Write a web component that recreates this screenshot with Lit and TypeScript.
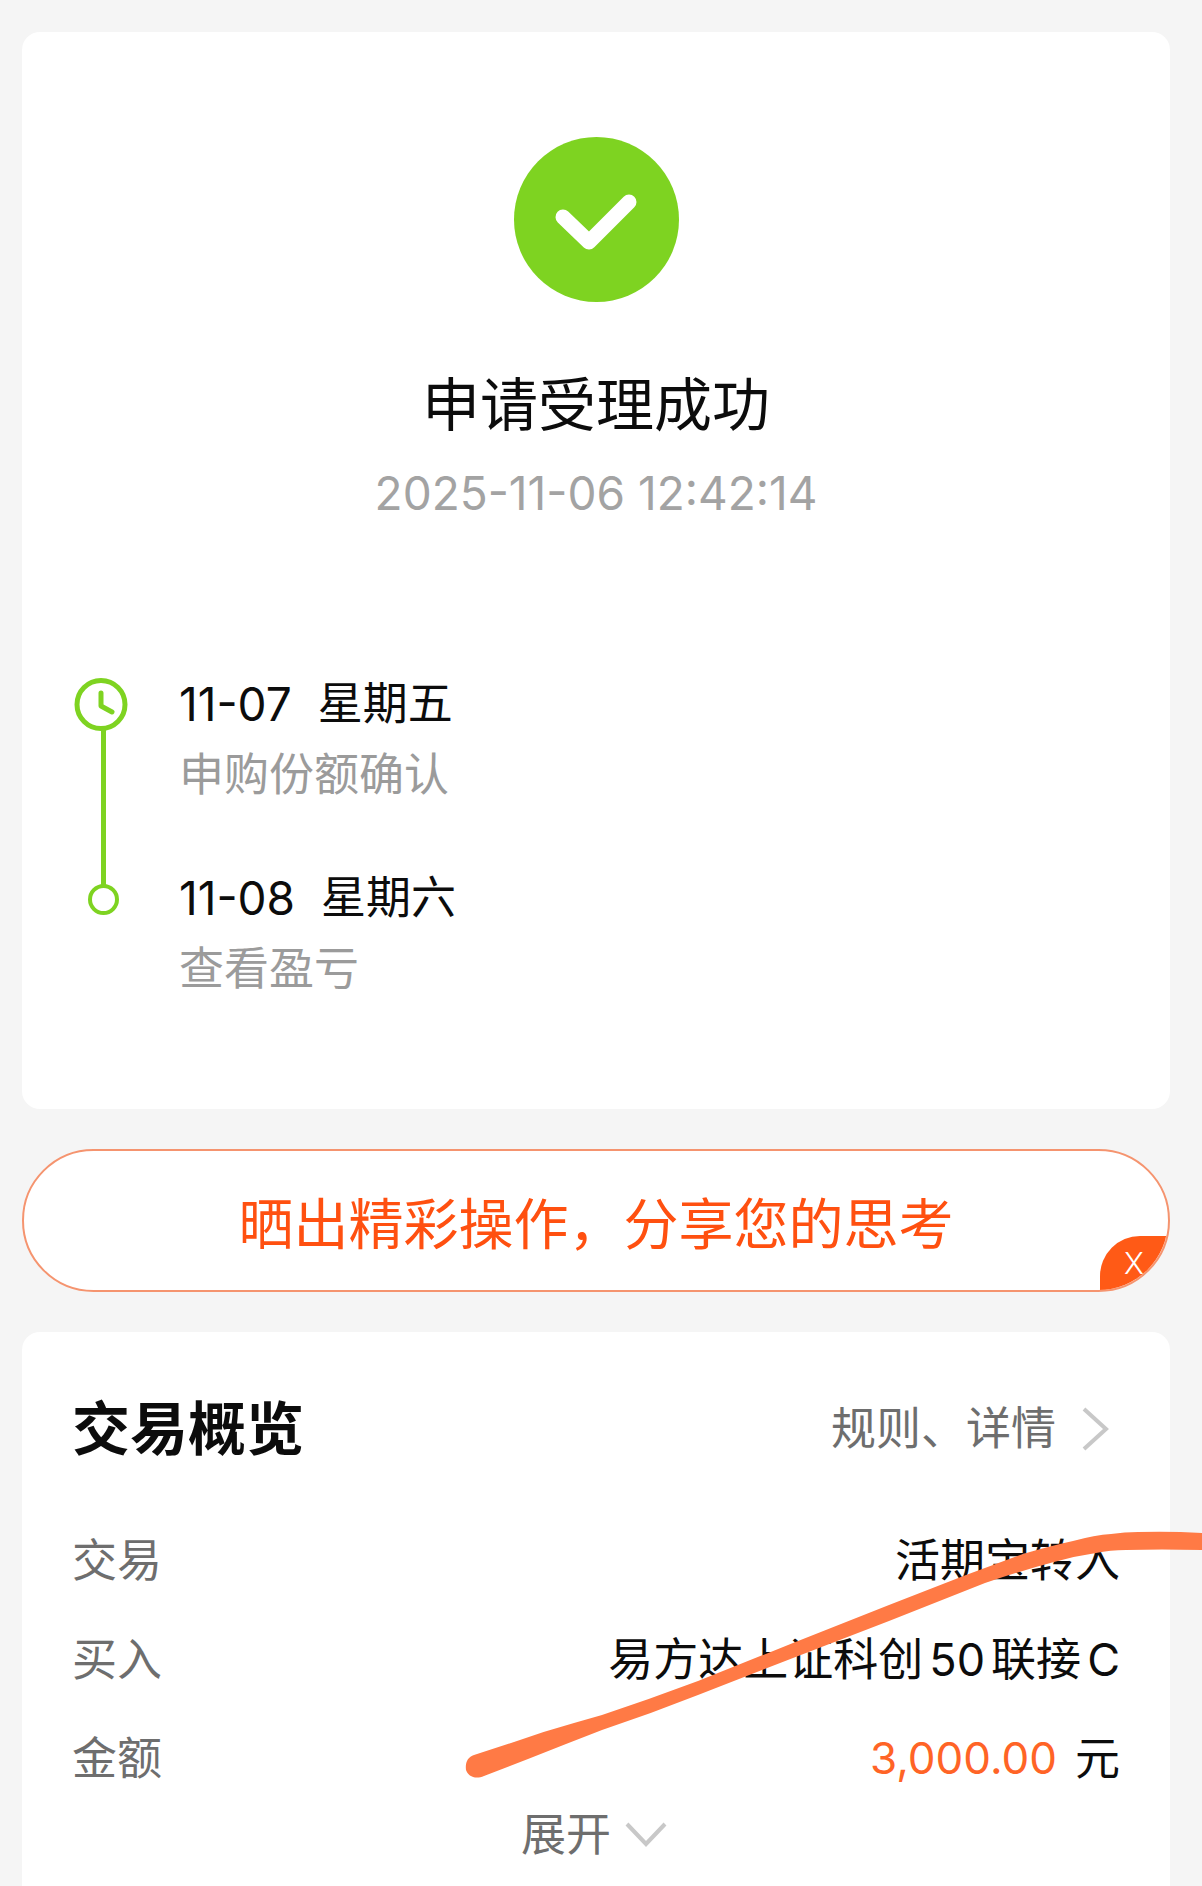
import { LitElement, html, svg, css } from "lit";
import { customElement } from "lit/decorators.js";

interface Step {
  date: string;
  weekday: string;
  note: string;
}

const STEPS: Step[] = [
  { date: "11-07", weekday: "星期五", note: "申购份额确认" },
  { date: "11-08", weekday: "星期六", note: "查看盈亏" },
];

const FUND_NAME = ["易方达上证科创", "50", "联接", "C"];

const clockMarker = svg`
  <circle cx="27" cy="27.500" r="24" fill="none" stroke="#7ed321" stroke-width="5" />
  <path d="M27 16V29L38 35" fill="none" stroke="#7ed321" stroke-width="5" stroke-linecap="round" stroke-linejoin="round" />
  <path d="M29.500 51V54" stroke="#7ed321" stroke-width="5" />`;

const dotMarker = svg`
  <path d="M29.500 0V15" stroke="#7ed321" stroke-width="5" />
  <circle cx="29.500" cy="28.500" r="13.500" fill="#fff" stroke="#7ed321" stroke-width="4" />`;

@customElement("app-root")
export class AppRoot extends LitElement {
  static styles = css`
    :host {
      display: block;
      color: #0c0c0c;
      font-family: Inter, "Noto Sans CJK SC", sans-serif;
      font-size: 45px;
    }
    .page {
      box-sizing: border-box;
      min-height: 100vh;
      display: flex;
      flex-direction: column;
      gap: 40px;
      padding: 32px 32px 0 22px;
      background: #f5f5f5;
      overflow: hidden;
    }
    .card {
      background: #fff;
      border-radius: 18px;
    }
    h1, h2, p, ol, dl, dd, dt {
      margin: 0;
      padding: 0;
    }
    button {
      border: 0;
      padding: 0;
      background: none;
      font: inherit;
      color: inherit;
      cursor: pointer;
    }
    .result {
      padding: 105px 50px 115px;
    }
    .summary {
      display: flex;
      flex-direction: column;
      align-items: center;
    }
    .done {
      display: block;
      width: 165px;
      height: 165px;
    }
    h1 {
      margin-top: 67px;
      font-size: 58px;
      line-height: 72px;
      font-weight: 400;
    }
    .time {
      margin-top: 24px;
      font-size: 46px;
      line-height: 56px;
      color: #a3a3a3;
    }
    .steps {
      margin-top: 156px;
      padding-left: 2px;
      list-style: none;
    }
    .step {
      display: flex;
      gap: 46px;
    }
    .track {
      display: flex;
      flex-direction: column;
      align-items: center;
      width: 59px;
    }
    .track svg {
      display: block;
      width: 59px;
      height: 54px;
      flex: none;
    }
    .line {
      flex: 1;
      width: 5px;
      background: #7ed321;
    }
    .step-body {
      display: flex;
      flex-direction: column;
      gap: 21px;
      padding-top: 2px;
      line-height: 50px;
    }
    .step:not(:last-child) .step-body {
      padding-bottom: 71px;
    }
    .when {
      display: flex;
      gap: 26px;
    }
    .date {
      font-size: 46px;
    }
    .note {
      color: #9b9b9b;
    }
    .share {
      position: relative;
      display: flex;
      border: 2px solid #f5946f;
      border-radius: 72px;
      background: #fff;
      overflow: hidden;
    }
    .share-main {
      flex: 1;
      padding: 42px 0 34px;
      font-size: 55px;
      line-height: 63px;
      color: #ff5010;
    }
    .share-close {
      position: absolute;
      right: 0;
      bottom: 0;
      width: 68px;
      height: 54px;
      border-top-left-radius: 40px;
      background: #ff5a16;
      color: #fff;
      font-size: 30px;
      font-weight: 300;
      line-height: 54px;
    }
    .overview {
      position: relative;
      flex: 1;
      padding: 62px 50px 20px;
      border-radius: 18px 18px 0 0;
    }
    .head {
      display: flex;
      justify-content: space-between;
      align-items: center;
      line-height: 70px;
    }
    h2 {
      font-size: 58px;
      font-weight: 700;
    }
    .rules {
      display: flex;
      align-items: center;
      gap: 24px;
      color: #6e6e6e;
      text-decoration: none;
    }
    .rules svg {
      width: 40px;
      height: 46px;
    }
    .rows {
      display: flex;
      flex-direction: column;
      gap: 40px;
      margin-top: 67px;
    }
    .row {
      display: flex;
      justify-content: space-between;
      line-height: 59px;
    }
    dt {
      color: #6e6e6e;
    }
    .fund {
      display: flex;
      gap: 6px;
    }
    .sum {
      display: flex;
      gap: 18px;
    }
    .amount {
      font-size: 44px;
      color: #ff6426;
    }
    .expand {
      display: flex;
      align-items: center;
      gap: 14px;
      margin: 17px auto 0;
      line-height: 59px;
      color: #6e6e6e;
    }
    .expand svg {
      width: 46px;
      height: 30px;
    }
    .scribble {
      position: absolute;
      top: 188px;
      right: -32px;
      width: 737px;
      height: 270px;
      pointer-events: none;
    }
  `;

  render() {
    return html`
      <main class="page">
        <section class="card result">
          <div class="summary">
            <svg class="done" viewBox="0 0 165 165" aria-hidden="true">
              <circle cx="82.500" cy="82.500" r="82.500" fill="#7ed321" />
              <path d="M49 80L75 105L115 65" fill="none" stroke="#fff" stroke-width="15" stroke-linecap="round" stroke-linejoin="round" />
            </svg>
            <h1>申请受理成功</h1>
            <p class="time">2025-11-06 12:42:14</p>
          </div>
          <ol class="steps">
            ${STEPS.map(
              (step, i) => html`
                <li class="step">
                  <div class="track">
                    <svg viewBox="0 0 59 54" aria-hidden="true">${i === 0 ? clockMarker : dotMarker}</svg>
                    ${i < STEPS.length - 1 ? html`<span class="line"></span>` : ""}
                  </div>
                  <div class="step-body">
                    <p class="when"><span class="date">${step.date}</span><span>${step.weekday}</span></p>
                    <p class="note">${step.note}</p>
                  </div>
                </li>
              `
            )}
          </ol>
        </section>

        <div class="share">
          <button class="share-main" type="button">晒出精彩操作，分享您的思考</button>
          <button class="share-close" type="button">X</button>
        </div>

        <section class="card overview">
          <div class="head">
            <h2>交易概览</h2>
            <a class="rules" href="#rules">
              规则、详情
              <svg viewBox="0 0 40 46" aria-hidden="true">
                <path d="M4 3L26 23L4 43" fill="none" stroke="#c8c8c8" stroke-width="4" />
              </svg>
            </a>
          </div>
          <dl class="rows">
            <div class="row">
              <dt>交易</dt>
              <dd>活期宝转入</dd>
            </div>
            <div class="row">
              <dt>买入</dt>
              <dd class="fund">${FUND_NAME.map((part) => html`<span>${part}</span>`)}</dd>
            </div>
            <div class="row">
              <dt>金额</dt>
              <dd class="sum"><span class="amount">3,000.00</span><span>元</span></dd>
            </div>
          </dl>
          <button class="expand" type="button">
            展开
            <svg viewBox="0 0 46 30" aria-hidden="true">
              <path d="M2 4L21 24L40 4" fill="none" stroke="#c8c8c8" stroke-width="4" />
            </svg>
          </button>
          <svg class="scribble" viewBox="465 1520 737 270" aria-hidden="true">
            <path
              fill="#ff7a45"
              d="M474 1755L517 1741Q545 1731 574 1723L602 1715Q650 1699 698 1681L793 1643L889 1605L966 1575L1023 1554Q1050 1546 1073 1541Q1095 1535 1111 1534Q1125 1532 1138 1532Q1170 1531 1202 1533V1550Q1160 1549 1126 1550Q1110 1550 1096 1553Q1075 1556 1054 1562Q1020 1571 985 1583L889 1621L793 1658L698 1695Q650 1714 602 1730L566 1744L528 1759L484 1776C475 1780 468 1776 466 1770C465 1762 468 1757 474 1755Z"
            />
          </svg>
        </section>
      </main>
    `;
  }
}
